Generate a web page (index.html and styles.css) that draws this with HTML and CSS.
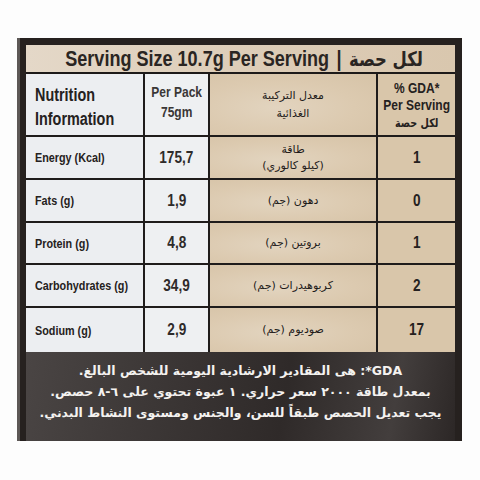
FILE: index.html
```html
<!DOCTYPE html>
<html lang="en">
<head>
    <meta charset="UTF-8">
    <meta name="viewport" content="width=device-width, initial-scale=1.0">
    <title>Nutrition Information</title>
    <link rel="stylesheet" href="styles.css">
</head>
<body>
    <div class="label">
        <div class="serving">
            <span class="cond">Serving Size 10.7g Per Serving <span class="bar">|</span> <span class="ar" dir="rtl">لكل حصة</span></span>
        </div>

        <div class="facts">
            <!-- header row -->
            <div class="cell name head-name"><span class="cond">Nutrition<br>Information</span></div>
            <div class="cell pack head-pack"><span class="cond">Per Pack<br>75gm</span></div>
            <div class="cell arabic head-ar" dir="rtl">معدل التركيبة<br>الغذائية</div>
            <div class="cell gda head-gda"><span class="cond">% GDA*<br>Per Serving<br><span class="ar" dir="rtl">لكل حصة</span></span></div>

            <div class="cell name"><span class="cond">Energy (Kcal)</span></div>
            <div class="cell pack"><span class="cond">175,7</span></div>
            <div class="cell arabic" dir="rtl">طاقة<br>(كيلو كالوري)</div>
            <div class="cell gda"><span class="cond">1</span></div>

            <div class="cell name"><span class="cond">Fats (g)</span></div>
            <div class="cell pack"><span class="cond">1,9</span></div>
            <div class="cell arabic" dir="rtl">دهون (جم)</div>
            <div class="cell gda"><span class="cond">0</span></div>

            <div class="cell name"><span class="cond">Protein (g)</span></div>
            <div class="cell pack"><span class="cond">4,8</span></div>
            <div class="cell arabic" dir="rtl">بروتين (جم)</div>
            <div class="cell gda"><span class="cond">1</span></div>

            <div class="cell name"><span class="cond">Carbohydrates (g)</span></div>
            <div class="cell pack"><span class="cond">34,9</span></div>
            <div class="cell arabic" dir="rtl">كربوهيدرات (جم)</div>
            <div class="cell gda"><span class="cond">2</span></div>

            <div class="cell name last"><span class="cond">Sodium (g)</span></div>
            <div class="cell pack last"><span class="cond">2,9</span></div>
            <div class="cell arabic last" dir="rtl">صوديوم (جم)</div>
            <div class="cell gda last"><span class="cond">17</span></div>
        </div>

        <div class="note" dir="rtl">
            <p class="note-first">GDA*: هى المقادير الارشادية اليومية للشخص البالغ.</p>
            <p>بمعدل طاقة <span class="digits">٢٠٠٠</span> سعر حراري. ١ عبوة تحتوي على ٦-٨ حصص.</p>
            <p>يجب تعديل الحصص طبقاً للسن، والجنس ومستوى النشاط البدني.</p>
        </div>
    </div>
</body>
</html>
```

FILE: styles.css
```css
* {
    margin: 0;
    padding: 0;
    box-sizing: border-box;
}

body {
    background: #fdfdfd;
    font-family: "Liberation Sans", Arial, sans-serif;
    color: #252120;
}

/* the label print uses a condensed face, squeeze the regular one */
.cond {
    display: inline-block;
    white-space: nowrap;
    transform: scaleX(0.8);
    transform-origin: center;
}

.label {
    width: 445px;
    height: 403px;
    margin: 38px 0 0 17px;
    padding: 7px 7px 0 6px;
    border-left: 3px solid #5d5856;
    background: #26211f;
    display: flex;
    flex-direction: column;
}

.serving {
    height: 29px;
    border-bottom: 2px solid #1d1a19;
    background: linear-gradient(90deg, #e4d8c8 0%, #ddcdb8 50%, #d9c7ae 100%);
    display: flex;
    justify-content: center;
    align-items: center;
    font-size: 22px;
    font-weight: bold;
    line-height: 27px;
    color: #2a2522;
}

.serving .cond {
    transform: scaleX(0.82);
    margin-left: 8px;
}

.serving .bar {
    margin: 0 3px;
}

.serving .ar {
    font-family: "DejaVu Sans", sans-serif;
    font-size: 20px;
}

.facts {
    display: grid;
    grid-template-columns: 119px 65px 168px 77px;
    grid-template-rows: 63px 43px 43px 42px 43px 44px;
}

.cell {
    display: flex;
    align-items: center;
    justify-content: center;
    text-align: center;
    border-right: 2px solid #1f1c1b;
    border-bottom: 2px solid #1f1c1b;
    font-weight: bold;
}

.cell.last {
    border-bottom: none;
}

.name {
    justify-content: flex-start;
    text-align: left;
    padding-left: 9px;
    background: #eceef1;
    font-size: 13.5px;
}

.name .cond {
    transform-origin: left center;
}

.pack {
    background: #eef0f2;
    font-size: 17px;
    color: #2e2b2a;
}

.arabic {
    background: radial-gradient(ellipse at 40% 55%, #e2d4bf 0%, #dccab0 55%, #d6c3a7 100%);
    font-family: "DejaVu Sans", sans-serif;
    font-size: 11px;
    font-weight: normal;
    line-height: 16px;
    color: #1e1b1a;
}

.gda {
    border-right: none;
    background: #d9c6aa;
    font-size: 17px;
}

.head-name {
    font-size: 18px;
    line-height: 24px;
    padding-top: 4px;
}

.head-pack {
    font-size: 15px;
    line-height: 20px;
    align-items: flex-start;
    padding-top: 8px;
    color: #3a3736;
}

.head-ar {
    align-items: flex-start;
    padding-top: 13px;
    line-height: 18px;
}

.head-gda {
    font-size: 15px;
    line-height: 17px;
    padding-top: 2px;
}

.head-gda .ar {
    font-family: "DejaVu Sans", sans-serif;
    font-size: 12px;
}

.note {
    flex: 1;
    padding-top: 8px;
    background: linear-gradient(100deg, #4a4544 0%, #3a3534 35%, #2f2a29 60%, #433e3d 85%, #2c2726 100%);
    color: #f4f2f0;
    text-align: center;
    font-family: "DejaVu Sans", sans-serif;
    font-weight: bold;
    font-size: 12.5px;
    line-height: 21px;
    white-space: nowrap;
}

.note-first {
    font-size: 12.5px;
}

.digits {
    letter-spacing: 5px;
}
```
